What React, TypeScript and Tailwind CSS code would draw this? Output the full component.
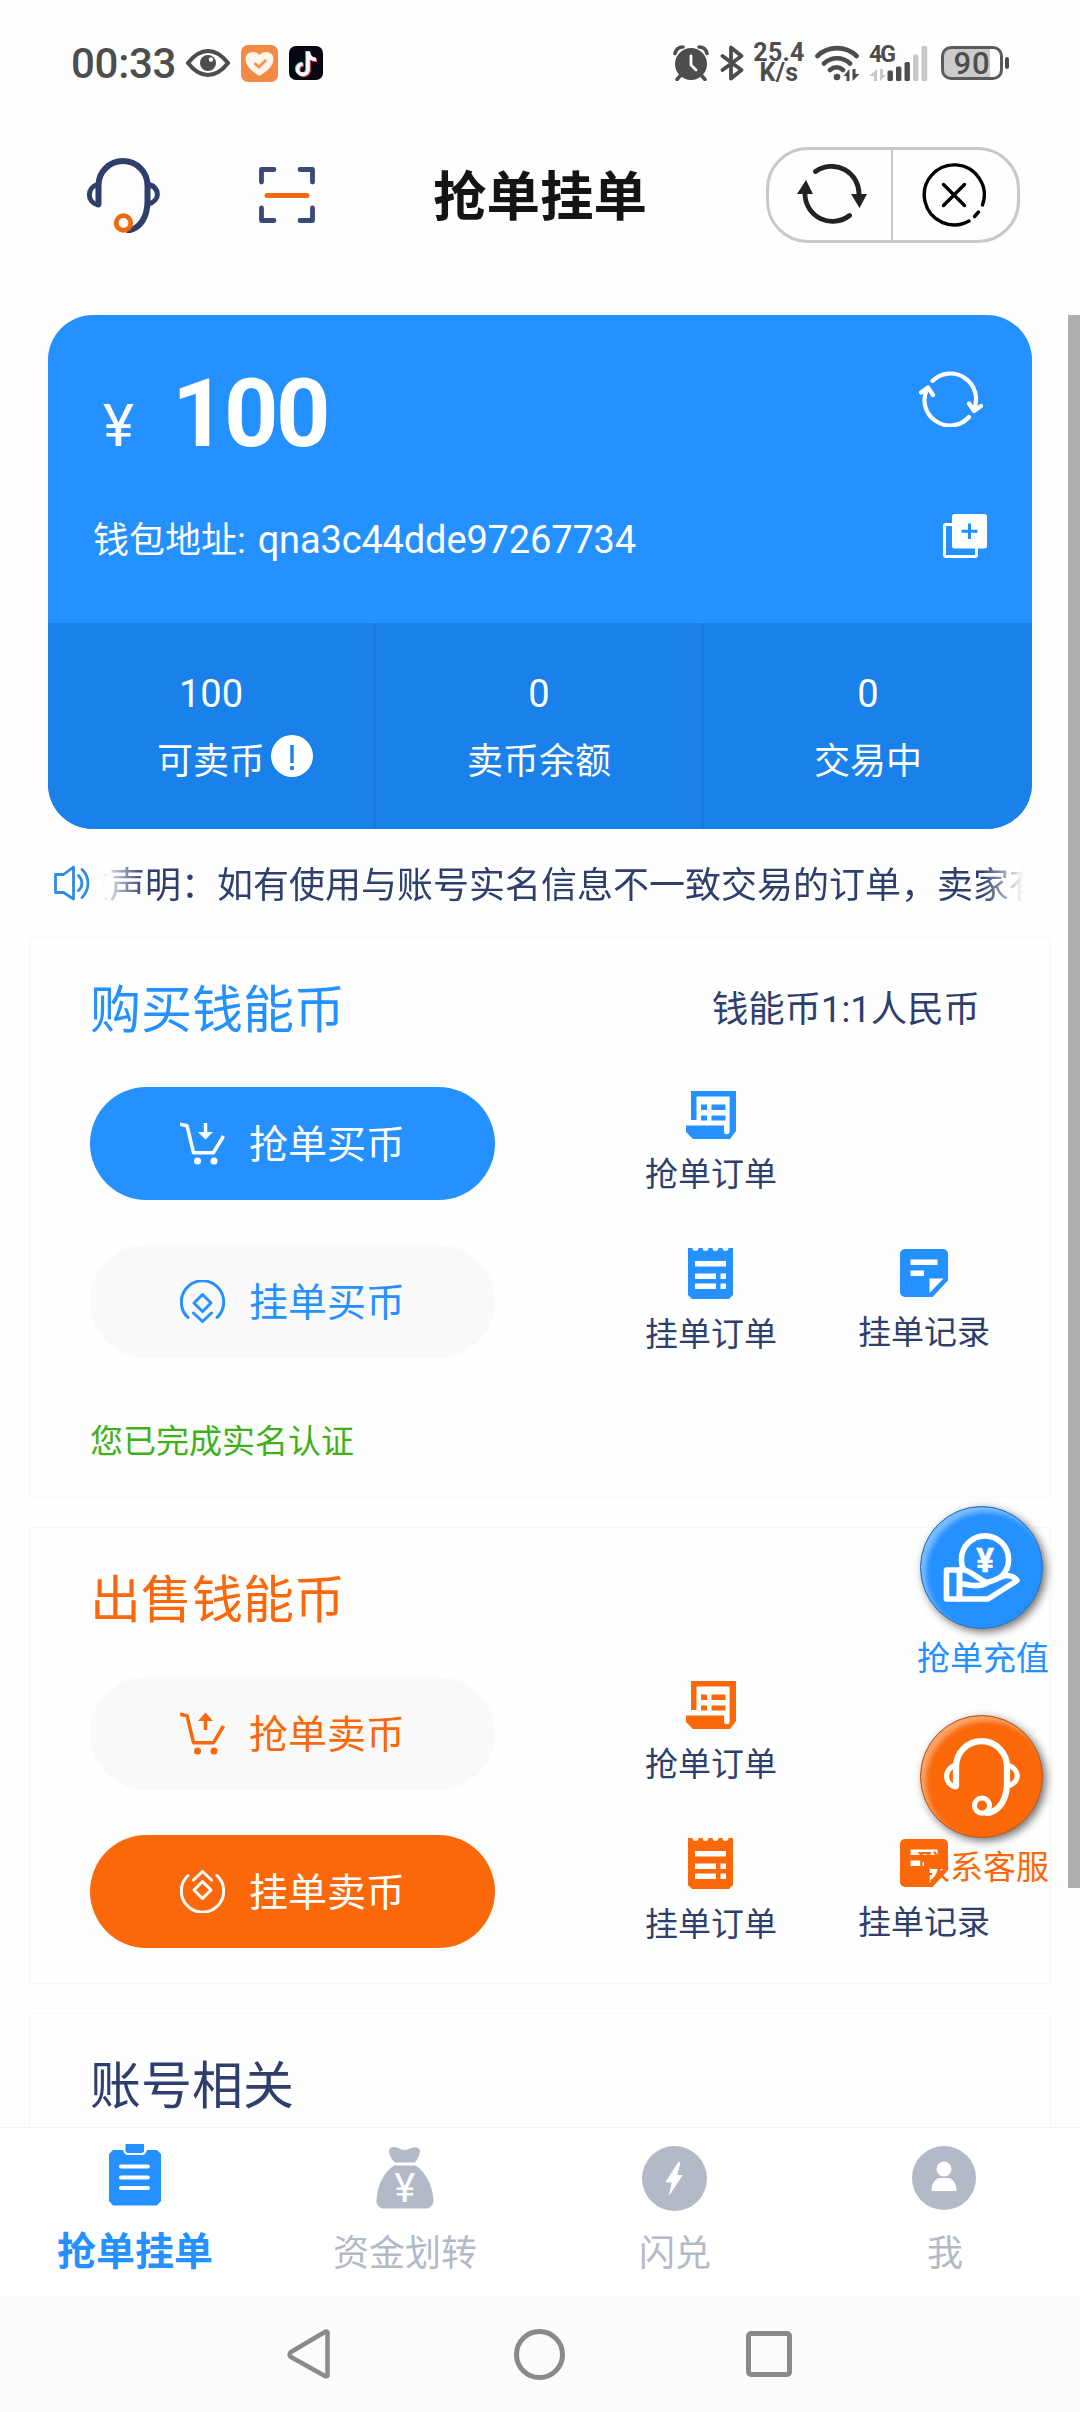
import React from 'react';

// --- Icons ---

type IconProps = { className?: string };

const HeadsetIcon: React.FC<IconProps & { micColor?: string }> = ({ className, micColor = 'currentColor' }) => (
    <svg viewBox="0 0 74 76" fill="none" stroke="currentColor" strokeWidth="6" strokeLinecap="round" strokeLinejoin="round" className={className}>
        <path d="M12.500 47V28.500a24.500 24.500 0 0 1 49 0V44c0 16-7 27-19 29.500" />
        <path d="M12 27C.500 31 .500 45 12 48" strokeWidth="5" />
        <path d="M62 27c12.500 4 12.500 17 0 20" strokeWidth="5" />
        <circle cx="37.500" cy="66" r="7.300" stroke={micColor} strokeWidth="4.800" />
    </svg>
);

const ScanIcon: React.FC<IconProps> = ({ className }) => (
    <svg viewBox="0 0 58 58" fill="none" stroke="#3a4976" strokeWidth="4.800" strokeLinecap="round" strokeLinejoin="round" className={className}>
        <path d="M3.500 16V3.500H16M42 3.500h12.500V16M54.500 42v12.500H42M16 54.500H3.500V42" />
        <path d="M9 29.500h40" stroke="#f0690f" strokeWidth="5" />
    </svg>
);

const ReloadSolidIcon: React.FC<IconProps> = ({ className }) => (
    <svg viewBox="0 0 70 60" fill="none" stroke="#222" strokeWidth="4.800" strokeLinecap="round" className={className}>
        <path d="M18.500 7.500A27.500 27.500 0 0 1 62 31" />
        <path d="M52.500 51.500A27.500 27.500 0 0 1 8 30" />
        <path d="M54 30h16l-7.500 14zM0 30h16L9 16z" fill="#222" stroke="none" />
    </svg>
);

const CloseIcon: React.FC<IconProps> = ({ className }) => (
    <svg viewBox="0 0 64 64" fill="none" stroke="#000" strokeWidth="3.400" strokeLinecap="round" className={className}>
        <path d="M47 58A30 30 0 1 1 60.500 42" />
        <path d="M52.500 53.500l4-4.500M21.500 21.500l21 21M42.500 21.500l-21 21" />
    </svg>
);

const ReloadLineIcon: React.FC<IconProps> = ({ className }) => (
    <svg viewBox="0 0 64 56" fill="none" stroke="#fff" strokeWidth="4.200" strokeLinecap="round" strokeLinejoin="round" className={className}>
        <path d="M13.500 10A25.500 25.500 0 0 1 55 38" />
        <path d="M50 46A25.500 25.500 0 0 1 8.500 17" />
        <path d="M2 21.500l7-5 5 7.500M62 35l-7 5-5-7.500" />
    </svg>
);

const CopyIcon: React.FC<IconProps> = ({ className }) => (
    <svg viewBox="0 0 44 44" fill="none" className={className}>
        <rect x="1.500" y="10.500" width="32" height="32" rx="1.500" stroke="#fff" strokeWidth="3" />
        <rect x="9" y="0" width="35" height="34.500" rx="2.500" fill="#fff" />
        <path d="M26.500 9.500v15.500M18.500 17.200h16" stroke="#2590ff" strokeWidth="3" />
    </svg>
);

const SpeakerIcon: React.FC<IconProps> = ({ className }) => (
    <svg viewBox="0 0 36 36" fill="none" stroke="#2e8be8" strokeWidth="2.800" strokeLinejoin="round" strokeLinecap="round" className={className}>
        <path d="M1.500 9.500h8L19.500 2v32L9.500 27.500h-8z" />
        <path d="M24.500 10.500c4.500 4.500 4.500 11 0 15M28 4.500c8 7.500 8 20 0 28" />
    </svg>
);

const CartIcon: React.FC<IconProps & { up?: boolean }> = ({ className, up }) => (
    <svg viewBox="0 0 45 43" fill="none" stroke="currentColor" strokeWidth="3.500" strokeLinejoin="round" className={className}>
        <path d="M0 2.200l7 1.500 6.500 27h20L43.500 14" />
        <circle cx="17.500" cy="39" r="3.500" fill="currentColor" stroke="none" />
        <circle cx="34" cy="39" r="3.500" fill="currentColor" stroke="none" />
        {up ? (
            <>
                <path d="M25.500 18V8" />
                <path d="M18 9l7.500-8.500L33 9z" fill="currentColor" stroke="none" />
            </>
        ) : (
            <>
                <path d="M25.500 1v11" />
                <path d="M18 10l7.500 7.500L33 10z" fill="currentColor" stroke="none" />
            </>
        )}
    </svg>
);

const CoinIcon: React.FC<IconProps> = ({ className }) => (
    <svg viewBox="0 0 45 43" fill="none" stroke="currentColor" strokeWidth="3" strokeLinejoin="round" strokeLinecap="round" className={className}>
        <path d="M8 37.500A21.200 21.200 0 1 1 37 37.500" />
        <path d="M22.500 14.500l8.500 8.500-8.500 8.500L14 23z" />
        <path d="M13.500 33l9 8.500 9-8.500" />
    </svg>
);

const BillIcon: React.FC<IconProps> = ({ className }) => (
    <svg viewBox="0 0 50 48" fill="currentColor" className={className}>
        <path fillRule="evenodd" d="M5 0h45v40l-6 8H7L0 41V34.500h38V40.500a2.800 2.800 0 0 0 5.600 0V5.500H10.500V29H5z" />
        <path d="M15 13.500h6V19h-6zM25.500 13.500H39.500V19H25.500zM15 24.500h6V29.500h-6zM25.500 24.500H39.500V29.500H25.500z" />
    </svg>
);

const TicketIcon: React.FC<IconProps> = ({ className }) => (
    <svg viewBox="0 0 45 51" fill="currentColor" className={className}>
        <path d="M0 0h4.500a3 3 0 0 0 6 0h4a3 3 0 0 0 6 0h4a3 3 0 0 0 6 0h4a3 3 0 0 0 6 0H45v47l-4 4H4l-4-4z" />
        <path d="M7 13h31v5.500H7zM7 25.500h21V31H7zM32.500 25.500H38V31h-5.500zM7 35.500h21V41H7zM32.500 35.500H38V41h-5.500z" fill="#fff" />
    </svg>
);

const NoteIcon: React.FC<IconProps> = ({ className }) => (
    <svg viewBox="0 0 48 48" fill="currentColor" className={className}>
        <path d="M5 0h38a5 5 0 0 1 5 5v26.500L32.500 48H5a5 5 0 0 1-5-5V5a5 5 0 0 1 5-5z" />
        <path d="M10.500 10.500h27V16h-27zM10.500 21.500H24V27H10.500zM29.500 29.500H43.500L29.500 44z" fill="#fff" />
    </svg>
);

const HandCoinIcon: React.FC<IconProps> = ({ className }) => (
    <svg viewBox="0 0 77 71" fill="none" stroke="#fff" strokeWidth="5.600" strokeLinejoin="round" strokeLinecap="round" className={className}>
        <circle cx="42" cy="27.500" r="23.600" />
        <text x="42" y="39.500" textAnchor="middle" fontSize="33" fontWeight="700" fill="#fff" stroke="#fff" strokeWidth="0.600">¥</text>
        <path d="M16.500 38H22C30 41 36 47 43 50.500 51 50 57 44 64 43.500c5 0 9 3 10 5L45 67H16.500z" fill="#2590ff" />
        <path d="M3.500 38h13v29h-13zM21 52c8 2 16 3 23-1" />
    </svg>
);

const ClipboardIcon: React.FC<IconProps> = ({ className }) => (
    <svg viewBox="0 0 52 62" fill="currentColor" className={className}>
        <path d="M4 6h10c1 3 2 5 5 5h14c3 0 4-2 5-5h10l4 4v47l-4 4.500H4L0 57V10z" />
        <path d="M16.500 0h18.500v7.500l-2 1.500H18.500l-2-1.500z" />
        <path d="M12 22.500h27M12 33.500h27M12 44h27" stroke="#fff" strokeWidth="4" strokeLinecap="round" />
    </svg>
);

const MoneyBagIcon: React.FC<IconProps> = ({ className }) => (
    <svg viewBox="0 0 58 62" fill="currentColor" className={className}>
        <path d="M13 3.500C14-.5 19-.500 22 1c4 2.500 9 2.500 13 0 4-1.500 8-1 9 2.500 0 5-3 9-5 12H19c-3-3-6-7-6-12z" />
        <path d="M18 18.500h22c10 7 16.500 20 17.500 34 0 5-2 7-5.500 9H6c-4-2-6-4-5.500-9C1.500 38 8 25 18 18.500z" />
        <text x="28.700" y="55" textAnchor="middle" fontSize="40" fontWeight="400" fill="#fff">¥</text>
    </svg>
);

const FlashIcon: React.FC<IconProps> = ({ className }) => (
    <svg viewBox="0 0 65 65" fill="currentColor" className={className}>
        <circle cx="32.500" cy="32.500" r="32.500" />
        <path d="M36.500 16.500L24 36h6.500L27.500 48.500 40 29.500h-5.500L38 17z" fill="#fff" stroke="#fff" strokeLinejoin="round" />
    </svg>
);

const PersonIcon: React.FC<IconProps> = ({ className }) => (
    <svg viewBox="0 0 64 64" fill="currentColor" className={className}>
        <circle cx="32" cy="32" r="32" />
        <circle cx="32" cy="23" r="7.500" fill="#fff" />
        <path d="M19.500 45c0-8 4-13 9-13h7c5 0 9 5 9 13z" fill="#fff" />
    </svg>
);

// --- Status bar ---

const StatusBar: React.FC = () => (
    <div className="flex h-[126px] shrink-0 items-center pl-[71px] pr-[71px] text-[#4d4d4d]">
        <span className="w-[104px] pt-[2px] text-[42px] font-medium leading-none tracking-[-0.3px]">00:33</span>
        <svg viewBox="0 0 44 28" className="ml-[11px] h-7 w-11" fill="none">
            <path d="M2 14C9 5 15 2 22 2s13 3 20 12c-7 9-13 12-20 12S9 23 2 14z" stroke="currentColor" strokeWidth="4" />
            <circle cx="22" cy="14" r="8" fill="currentColor" />
            <circle cx="25" cy="10.500" r="2.200" fill="#fff" />
        </svg>
        <svg viewBox="0 0 37 37" className="ml-[11px] h-[37px] w-[37px]">
            <rect width="37" height="37" rx="7" fill="#f58a47" />
            <path d="M18.500 31C10 26 4.500 20 4.500 14c0-7 9.500-9.500 14-4C23 4.500 32.500 7 32.500 14c0 6-5.500 12-14 17z" fill="#fff5ea" />
            <path d="M13.500 18l4.500 4 7-7" stroke="#f0954f" strokeWidth="2.800" fill="none" />
        </svg>
        <svg viewBox="0 0 34 34" className="ml-[11px] h-[34px] w-[34px]" fill="none" strokeWidth="3.600">
            <rect width="34" height="34" rx="7" fill="#060710" />
            <path d="M18 5v18.500a5.200 5.200 0 1 1-5.200-6M18 5c.500 5 3.500 8 8 8" stroke="#27d8d4" />
            <path d="M20 6.500V25a5.200 5.200 0 1 1-5.200-6M20 6.500c.500 5 3.500 8 8 8" stroke="#f0355f" />
            <path d="M19 5.500V24a5.200 5.200 0 1 1-5.200-6M19 5.500c.500 5 3.500 8 8 8" stroke="#fff" />
        </svg>

        <div className="ml-auto flex items-center">
            <svg viewBox="0 0 36 36" className="h-9 w-9" fill="none" stroke="currentColor" strokeLinecap="round">
                <circle cx="18" cy="19" r="16" fill="currentColor" stroke="none" />
                <path d="M2 8.500C3 4 6 2 10 2M34 8.500C33 4 30 2 26 2M7 31l-3 3.500M29 31l3 3.500" strokeWidth="3.500" />
                <path d="M18 11v9l5 5" stroke="#fff" strokeWidth="2.800" />
            </svg>
            <svg viewBox="0 0 24 36" className="ml-[11px] h-9 w-6" fill="none" stroke="currentColor" strokeWidth="3.800" strokeLinejoin="round" strokeLinecap="round">
                <path d="M2.500 11l19 14L11 33.500v-31L21.500 11l-19 14" />
            </svg>
            <div className="ml-[9px] w-[52px] text-center text-[25px] font-bold leading-[20px] tracking-[0.3px]">
                <div>25.4</div>
                <div>K/s</div>
            </div>
            <svg viewBox="0 0 44 36" className="ml-[10px] h-9 w-11" fill="none" stroke="currentColor" strokeWidth="4.600" strokeLinecap="round">
                <path d="M2.500 11C13 .500 31 .500 41.500 11M9 18.500c7.500-7 18.500-7 26 0M15 25c4-3.500 9-3.500 13 0" />
                <circle cx="22" cy="32" r="3.300" fill="currentColor" stroke="none" />
                <path d="M34.500 24v12h-3v-5h-3zM37.500 24v12l7-7h-4v-5z" fill="currentColor" stroke="none" />
            </svg>
            <div className="relative ml-[10px] h-9 w-[59px]">
                <span className="absolute left-0 top-[1px] text-[23px] font-bold leading-[18px] tracking-[-2px]">4G</span>
                <svg viewBox="0 0 59 36" className="h-9 w-[59px]" fill="currentColor">
                    <path d="M8 24v12H5v-5H0zM11 24v12l6-6h-3v-6z" fill="#c8c8c8" />
                    <rect x="18.500" y="25.500" width="5.400" height="10.500" rx="1.500" />
                    <rect x="27" y="21.500" width="5.400" height="14.500" rx="1.500" />
                    <rect x="35.500" y="17" width="5.400" height="19" rx="1.500" />
                    <rect x="44" y="9.500" width="5.400" height="26.500" rx="1.500" fill="#c8c8c8" />
                    <rect x="52.500" y="1" width="5.800" height="35" rx="1.500" fill="#c8c8c8" />
                </svg>
            </div>
            <div className="ml-[13px] flex h-[34px] w-[62px] items-center justify-center rounded-[10px] border-[3px] border-[#5a5a5a] bg-[linear-gradient(90deg,#cbcbcb_82%,#fff_82%)] text-[31px] font-medium leading-none tracking-[1px]">
                90
            </div>
            <div className="ml-[2px] h-3 w-1 rounded-sm bg-[#4d4d4d]" />
        </div>
    </div>
);

// --- Page header ---

const Header: React.FC = () => (
    <header className="flex h-[138px] shrink-0 items-center">
        <div className="flex w-[433px] items-center pl-[86px]">
            <HeadsetIcon className="h-[76px] w-[74px] text-[#2e3f6e]" micColor="#f0690f" />
            <ScanIcon className="ml-[98px] h-[58px] w-[58px]" />
        </div>
        <h1 className="pt-[5px] text-[53.5px] font-bold leading-none text-[#141414]">抢单挂单</h1>
        <div className="ml-auto mr-[60px] flex h-24 w-[254px] rounded-[42px] border-[3px] border-[#c8c8c8]">
            <div className="flex w-1/2 items-center justify-center border-r-2 border-[#c8c8c8] pb-[2px] pl-[4px]">
                <ReloadSolidIcon className="h-[60px] w-[70px]" />
            </div>
            <div className="flex w-1/2 items-center justify-center pr-[3px]">
                <CloseIcon className="h-16 w-16" />
            </div>
        </div>
    </header>
);

// --- Wallet ---

const stats = [
    { value: '100', label: '可卖币', hint: true },
    { value: '0', label: '卖币余额' },
    { value: '0', label: '交易中' },
];

const WalletCard: React.FC = () => (
    <div className="mx-12 shrink-0 overflow-hidden rounded-[45px] bg-[#2590ff] text-white">
        <div className="h-[308px] pl-[45px] pr-[45px]">
            <div className="flex h-[170px] items-start justify-between">
                <div className="flex items-baseline pl-[10px] pt-[51px]">
                    <span className="w-[69px] text-[59px] leading-none">¥</span>
                    <span className="text-[95px] font-bold leading-none tracking-[-2.500px]">100</span>
                </div>
                <ReloadLineIcon className="mr-[4px] mt-[56px] h-14 w-16" />
            </div>
            <div className="flex h-[108px] items-center justify-between">
                <span className="pt-[2px] text-[36px] leading-none">
                    钱包地址: <span className="ml-[3px] text-[38px] tracking-[-0.150px]">qna3c44dde97267734</span>
                </span>
                <CopyIcon className="mb-[6px] h-11 w-11" />
            </div>
        </div>
        <div className="flex h-[206px] bg-[#1a80ea]">
            {stats.map((stat) => (
                <div key={stat.label} className="flex w-1/3 flex-col items-center border-r-2 border-[#1878df] pt-[51px] last:border-r-0">
                    <span className="text-[38px] leading-[40px]">{stat.value}</span>
                    <div className="relative mt-[28px] text-[36px] leading-[40px]">
                        {stat.label}
                        {stat.hint && (
                            <svg viewBox="0 0 42 42" className="absolute -right-[48px] -top-[7px] h-[42px] w-[42px]">
                                <circle cx="21" cy="21" r="21" fill="#fff" />
                                <path d="M21 10v18" stroke="#1a80ea" strokeWidth="3.400" />
                                <circle cx="21" cy="33" r="2.200" fill="#1a80ea" />
                            </svg>
                        )}
                    </div>
                </div>
            ))}
        </div>
    </div>
);

const Notice: React.FC = () => (
    <div className="flex h-[108px] shrink-0 items-center pl-[54px]">
        <SpeakerIcon className="h-9 w-9" />
        <div className="ml-[12px] flex w-[922px] overflow-hidden pt-[6px] [mask-image:linear-gradient(90deg,transparent,#000_42px,#000_880px,transparent)]">
            <span className="-ml-[29px] whitespace-nowrap text-[36px] leading-[52px] text-[#2e3f6e]">
                重声明：如有使用与账号实名信息不一致交易的订单，卖家有
            </span>
        </div>
    </div>
);

// --- Trade sections ---

const Shortcut: React.FC<{ icon: React.ReactNode; label: string; className?: string }> = ({ icon, label, className }) => (
    <div className={`flex w-[132px] flex-col items-center ${className ?? ''}`}>
        {icon}
        <span className="mt-[19px] text-[33px] leading-[34px] text-[#2e3f6e]">{label}</span>
    </div>
);

const PillButton: React.FC<{ icon: React.ReactNode; className: string; children: React.ReactNode }> = ({ icon, className, children }) => (
    <button className={`flex h-[113px] w-[405px] items-center rounded-full pl-[90px] text-[39px] leading-none ${className}`}>
        {icon}
        <span className="ml-[24px] pt-[3px]">{children}</span>
    </button>
);

const TradeSection: React.FC<{
    title: string;
    extra?: string;
    color: string;
    sectionClass: string;
    children?: React.ReactNode;
    footer?: React.ReactNode;
}> = ({ title, extra, color, sectionClass, children, footer }) => (
    <section className={`mx-[29px] mb-[29px] shrink-0 border border-[#f7f7f7] px-[60px] ${sectionClass}`}>
        <div className="flex h-[149px] items-center justify-between pb-[5px] pr-[10px]">
            <h2 className={`text-[51px] leading-none ${color}`}>{title}</h2>
            {extra && <span className="pt-[1px] text-[36.400px] leading-none text-[#2e3f6e]">{extra}</span>}
        </div>
        <div className={`flex flex-col gap-[45px] ${color}`}>{children}</div>
        {footer}
    </section>
);

const TradeRow: React.FC<{ button: React.ReactNode; children: React.ReactNode }> = ({ button, children }) => (
    <div className="flex h-[113px] items-start">
        {button}
        <div className="ml-[150px] flex">{children}</div>
    </div>
);

const BuySection: React.FC = () => (
    <TradeSection
        title="购买钱能币"
        extra="钱能币1:1人民币"
        color="text-[#2590ff]"
        sectionClass="h-[561px]"
        footer={<p className="mt-[64px] text-[33px] leading-[40px] text-[#3fb01a]">您已完成实名认证</p>}
    >
        <TradeRow button={<PillButton className="bg-[#2590ff] text-white" icon={<CartIcon className="h-[43px] w-[45px]" />}>抢单买币</PillButton>}>
            <Shortcut className="pt-1" icon={<BillIcon className="h-12 w-[50px]" />} label="抢单订单" />
        </TradeRow>
        <TradeRow button={<PillButton className="bg-[#f9f9f9]" icon={<CoinIcon className="h-[43px] w-[45px]" />}>挂单买币</PillButton>}>
            <Shortcut className="pt-[3px]" icon={<TicketIcon className="mr-[2px] h-[51px] w-[45px]" />} label="挂单订单" />
            <Shortcut className="ml-[81px] pt-1" icon={<NoteIcon className="h-12 w-12" />} label="挂单记录" />
        </TradeRow>
    </TradeSection>
);

const SellSection: React.FC = () => (
    <TradeSection title="出售钱能币" color="text-[#fa6809]" sectionClass="h-[457px]">
        <TradeRow button={<PillButton className="bg-[#f9f9f9]" icon={<CartIcon up className="h-[43px] w-[45px]" />}>抢单卖币</PillButton>}>
            <Shortcut className="pt-1" icon={<BillIcon className="h-12 w-[50px]" />} label="抢单订单" />
        </TradeRow>
        <TradeRow button={<PillButton className="bg-[#fa6809] text-white" icon={<CoinIcon className="h-[43px] w-[45px] rotate-180" />}>挂单卖币</PillButton>}>
            <Shortcut className="pt-[3px]" icon={<TicketIcon className="mr-[2px] h-[51px] w-[45px]" />} label="挂单订单" />
            <Shortcut className="ml-[81px] pt-1" icon={<NoteIcon className="h-12 w-12" />} label="挂单记录" />
        </TradeRow>
    </TradeSection>
);

// --- Floating actions ---

const FloatingAction: React.FC<{ icon: React.ReactNode; label: string; circle: string; text: string }> = ({ icon, label, circle, text }) => (
    <div className={`flex w-[132px] flex-col items-center ${text}`}>
        <div className={`mr-[4px] flex h-[123px] w-[123px] items-center justify-center rounded-full border text-white ${circle}`}>{icon}</div>
        <span className="mt-[12px] text-[33px] leading-[36px]">{label}</span>
    </div>
);

// --- Bottom bars ---

const tabs = [
    { name: '抢单挂单', icon: <ClipboardIcon className="h-[62px] w-[52px]" />, active: true },
    { name: '资金划转', icon: <MoneyBagIcon className="h-[62px] w-[58px] overflow-visible" /> },
    { name: '闪兑', icon: <FlashIcon className="mr-[2px] h-[65px] w-[65px]" /> },
    { name: '我', icon: <PersonIcon className="mr-[2px] h-16 w-16" /> },
];

const TabBar: React.FC = () => (
    <nav className="flex h-[169px] shrink-0 border-t border-[#f3f3f3] bg-white">
        {tabs.map((tab) => (
            <div key={tab.name} className={`flex w-1/4 flex-col items-center ${tab.active ? 'text-[#2590ff]' : 'text-[#b3b9c6]'}`}>
                <div className={`flex h-[98px] items-center ${tab.active ? 'pb-[4px]' : 'pt-[2px]'}`}>{tab.icon}</div>
                <span className={tab.active ? 'text-[39px] font-bold leading-[53px]' : 'text-[36px] leading-[56px]'}>{tab.name}</span>
            </div>
        ))}
    </nav>
);

const SystemNav: React.FC = () => (
    <div className="flex h-[116px] shrink-0 items-center bg-[#fbfbfb] pl-[286px]">
        <svg viewBox="0 0 46 52" className="h-[52px] w-[46px]" fill="none" stroke="#8a8a8a" strokeWidth="4.500" strokeLinejoin="round">
            <path d="M41.500 4v44Q40 49 38 47.500L5 29q-3-2.500 0-5L38 4.500Q40 3 41.500 4z" />
        </svg>
        <div className="ml-[182px] h-[51px] w-[51px] rounded-full border-[5px] border-[#8a8a8a]" />
        <div className="ml-[181px] h-[46px] w-[46px] rounded-[5px] border-[5px] border-[#8a8a8a]" />
    </div>
);

export default function App() {
    return (
        <div className="relative flex h-[2412px] w-[1080px] flex-col overflow-hidden bg-[#fefefe] font-['Roboto','Noto_Sans_CJK_SC',sans-serif]">
            <StatusBar />
            <Header />
            <main className="flex min-h-0 flex-1 flex-col overflow-hidden pt-[51px]">
                <WalletCard />
                <Notice />
                <BuySection />
                <SellSection />
                <TradeSection title="账号相关" color="text-[#2e3f6e]" sectionClass="h-[457px]" />
            </main>
            <TabBar />
            <SystemNav />

            <div className="absolute right-[31px] top-[1506px] flex flex-col gap-[38px]">
                <FloatingAction
                    label="抢单充值"
                    text="text-[#2590ff]"
                    circle="border-[#2273b8] bg-[#2590ff] shadow-[3px_3px_8px_rgba(0,0,0,0.55),inset_5px_5px_5px_rgba(255,255,255,0.4)]"
                    icon={<HandCoinIcon className="h-[71px] w-[77px]" />}
                />
                <FloatingAction
                    label="联系客服"
                    text="text-[#fa6809]"
                    circle="border-[#b8561a] bg-[#fa6809] shadow-[3px_3px_8px_rgba(0,0,0,0.55),inset_5px_5px_5px_rgba(255,255,255,0.4)]"
                    icon={<HeadsetIcon className="h-[79px] w-[77px]" />}
                />
            </div>
            <div className="absolute right-0 top-[315px] h-[1573px] w-3 bg-[#aeaeae]" />
        </div>
    );
}
